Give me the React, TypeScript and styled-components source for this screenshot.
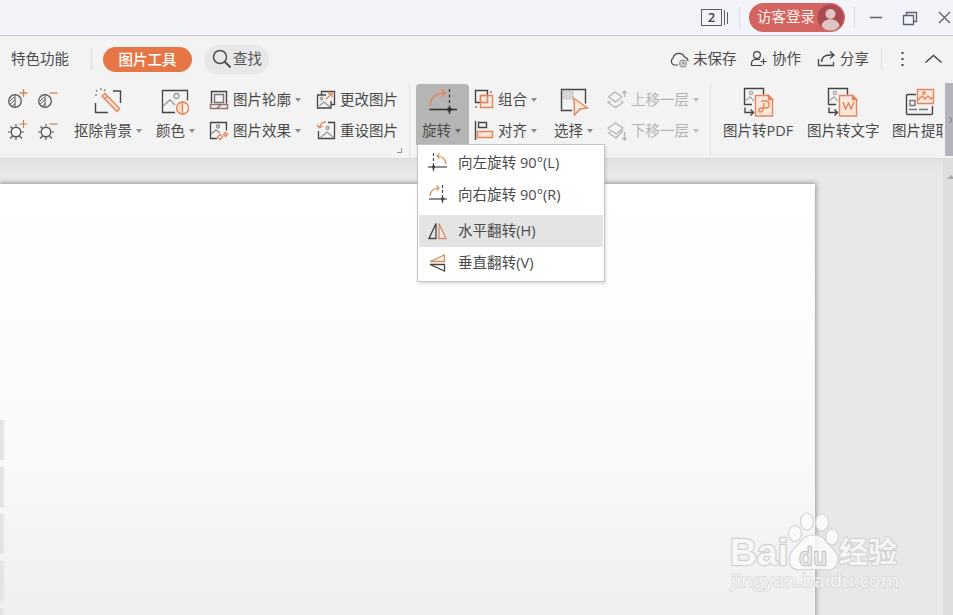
import React from "react";
import styled, { createGlobalStyle, css } from "styled-components";

const GlobalStyle = createGlobalStyle`
  * { box-sizing: border-box; }
  body { margin: 0; overflow: hidden; }
`;

const ORANGE = "#e0875c";
const DARK = "#454545";

const Window = styled.div`
  position: relative;
  display: flex;
  flex-direction: column;
  width: 953px;
  height: 615px;
  overflow: hidden;
  background: #e7e7e7;
  color: #4a4a4a;
  font-family: "Open Sans", "Noto Sans CJK SC", sans-serif;
  font-size: 14.5px;
  line-height: 20px;
  white-space: nowrap;
  svg { display: block; flex: none; fill: none; }
`;

const TitleBar = styled.header`
  display: flex;
  justify-content: flex-end;
  align-items: center;
  height: 36px;
  flex: none;
  background: #f2f4f9;
  border-bottom: 1px solid #c8cad3;
`;

const VLine = styled.span<{ $h: number; $l?: number; $r?: number }>`
  width: 1px;
  flex: none;
  height: ${(p) => p.$h}px;
  margin-left: ${(p) => p.$l ?? 0}px;
  margin-right: ${(p) => p.$r ?? 0}px;
  background: #dadce0;
`;

const TabCount = styled.div`
  display: flex;
  align-items: center;
  gap: 2px;
  height: 17px;
  b {
    width: 21px;
    height: 17px;
    border: 1px solid #59606c;
    font-size: 13px;
    line-height: 15px;
    font-weight: 600;
    text-align: center;
    color: #3c4047;
  }
  i { width: 1px; height: 15px; background: #59606c; }
  i:last-child { height: 12px; }
`;

const Login = styled.button`
  display: flex;
  align-items: center;
  justify-content: space-between;
  width: 96px;
  height: 29px;
  padding: 0 1px 1px 8px;
  border: 0;
  border-radius: 15px;
  background: #d4645f;
  color: #fff0ee;
  font: inherit;
`;

const WindowButtons = styled.div`
  display: flex;
  align-items: center;
  width: 83px;
`;

const TabBar = styled.nav`
  display: flex;
  align-items: center;
  height: 47px;
  flex: none;
  padding: 0 0 1px 11px;
  background: #f3f3f3;
`;

const ActiveTab = styled.span`
  width: 89px;
  height: 25px;
  border-radius: 13px;
  background: #e67646;
  color: #fff;
  font-weight: 500;
  line-height: 25px;
  text-align: center;
`;

const Search = styled.span`
  display: flex;
  align-items: center;
  gap: 1px;
  width: 65px;
  height: 29px;
  margin-left: 12px;
  padding-left: 8px;
  border-radius: 15px;
  background: #e8e8e9;
  color: #555;
`;

const Action = styled.span<{ $w: number }>`
  display: flex;
  align-items: center;
  gap: 4px;
  width: ${(p) => p.$w}px;
`;

const Spacer = styled.span`
  flex: 1;
`;

const Ribbon = styled.section`
  display: grid;
  grid-template-columns: 70px 82px 57px 107px 94px 6px 58px 78px 54px 105px 12px 84px 85px 51px 10px;
  height: 76px;
  flex: none;
  background: #f3f3f3;
  border-bottom: 1px solid #d7d7d7;
`;

const Adjust = styled.div`
  display: grid;
  grid-template-columns: 30px 30px;
  grid-template-rows: 31px 30px;
  padding: 5px 0 0 6px;
`;

const Big = styled.div<{ $pad?: number }>`
  display: flex;
  flex-direction: column;
  align-items: flex-start;
  gap: 3px;
  padding: 3px 0 0 ${(p) => p.$pad ?? 4}px;
  overflow: hidden;
`;

const IconSlot = styled.div<{ $ml: number }>`
  flex: none;
  padding-left: ${(p) => p.$ml}px;
  height: 32px;
`;

const LabelRow = styled.span`
  display: flex;
  align-items: center;
  gap: 4px;
`;

const Caret = styled.i<{ $dim?: boolean; $strong?: boolean }>`
  border: 3px solid transparent;
  border-top: 4px solid ${(p) => (p.$dim ? "#bdbdbd" : p.$strong ? "#666" : "#8c8c8c")};
  border-bottom: 0;
`;

const Stack = styled.div<{ $dim?: boolean }>`
  display: grid;
  grid-template-rows: 31px 31px;
  align-content: start;
  padding-top: 1px;
  ${(p) => p.$dim && css`color: #b3b3b3;`}
`;

const Small = styled.div`
  display: flex;
  align-items: center;
  gap: 4px;
`;

const Edge = styled.div`
  display: flex;
  align-items: flex-start;
  justify-content: space-between;
  border-right: 1px solid #e0e0e0;
  height: 74px;
`;

const Launcher = styled.span`
  align-self: flex-end;
  width: 5px;
  height: 5px;
  margin: 0 7px 4px -6px;
  border-right: 1px solid #999;
  border-bottom: 1px solid #999;
`;

const Rotate = styled.div`
  position: relative;
  display: flex;
  flex-direction: column;
  gap: 4px;
  width: 53px;
  height: 61px;
  margin-top: 1px;
  padding: 1px 0 0 6px;
  border-radius: 4px 4px 0 0;
  background: #b5b5b5;
`;

const Menu = styled.div`
  position: absolute;
  z-index: 3;
  left: 1px;
  top: 60px;
  width: 188px;
  height: 138px;
  padding: 2px 1px;
  background: #fff;
  border: 1px solid #c3c3c3;
  box-shadow: 1px 2px 3px rgba(0, 0, 0, 0.13);
`;

const MenuItem = styled.div<{ $hover?: boolean; $gap?: boolean }>`
  display: flex;
  align-items: center;
  gap: 10px;
  height: 32px;
  margin-top: ${(p) => (p.$gap ? 4 : 0)}px;
  padding-left: 9px;
  background: ${(p) => (p.$hover ? "#e4e4e4" : "transparent")};
  letter-spacing: 0.05px;
`;

const Overflow = styled.div`
  display: flex;
  align-items: center;
  justify-content: flex-end;
  width: 8px;
  height: 73px;
  margin-left: 2px;
  background: #b3b3bb;
  overflow: hidden;
`;

const Workspace = styled.main`
  display: flex;
  flex: 1;
  padding-top: 25px;
  background: linear-gradient(#e2e2e2, #e8e8e8 12px);
`;

const Page = styled.div`
  display: flex;
  flex-direction: column;
  width: 815px;
  height: 440px;
  padding-top: 236px;
  gap: 7px;
  background: linear-gradient(#fff 0, #fdfdfd 120px, #f9f9f9 280px, #efefef 431px);
  border-right: 1px solid #f8f8f8;
  box-shadow: 0 0 5px 1px rgba(0, 0, 0, 0.36);
`;

const Thumb = styled.span`
  flex: none;
  width: 3px;
  height: 40px;
  background: #e3e3e3;
  box-shadow: 1px 0 2px #e6e6e6;
`;

const ScrollBar = styled.div`
  width: 10px;
  height: 456px;
  margin: -25px 0 0 auto;
  padding: 16px 0 0 4px;
  background: #dedede;
`;

const Watermark = styled.div`
  position: absolute;
  left: 720px;
  top: 505px;
`;

const CloudIcon = () => (
  <svg width="20" height="20" viewBox="0 0 20 20" stroke={DARK} strokeWidth="1.2">
    <path d="M9 16H5a4 4 0 0 1-1-7 6 6 0 0 1 11.4-1A4.5 4.5 0 0 1 19 12" />
    <circle cx="14" cy="14.5" r="3.3" fill="#d8d8d8" stroke="#999" />
    <path d="M14 12.5v2.2h1.5" stroke="#888" />
  </svg>
);
const PeopleIcon = () => (
  <svg width="18" height="18" viewBox="0 0 18 18" stroke={DARK} strokeWidth="1.2">
    <circle cx="7" cy="5" r="3.4" />
    <path d="M10 9.5H5.500A4 4 0 0 0 1.500 13v2.500H12M10.500 11.500h6M13.500 8.500v6" />
  </svg>
);
const ShareIcon = () => (
  <svg width="19" height="18" viewBox="0 0 19 18" stroke={DARK} strokeWidth="1.3">
    <path d="M1.500 9v6.500h15V12M4.500 12c.4-4.500 3.500-7 8-7H17M13 1.500 17 5l-4 3.600" />
  </svg>
);

const HalfDisc = ({ plus }: { plus?: boolean }) => (
  <svg width="24" height="24" viewBox="0 0 24 24" stroke="#555" strokeWidth="1.3">
    <circle cx="9" cy="13" r="6.300" />
    <path d="M9 6.500v12.500M4 13l4-4M4.500 16 9 11.500M6.500 18 9 15.500" strokeWidth="1" />
    <path d={plus ? "M13.500 5h8M17.500 1v8" : "M13.500 5h8"} stroke="#cf8650" />
  </svg>
);
const Sun = ({ plus }: { plus?: boolean }) => (
  <svg width="24" height="24" viewBox="0 0 24 24" stroke="#555" strokeWidth="1.2">
    <circle cx="10" cy="13" r="4.800" strokeWidth="1.4" />
    <path d="M10 7V5M10 18.500V21M2 13h2.500M15.500 13H18M4.500 7.500l2 2M4 19.500 6.500 17M16 19.500 13.500 17" />
    <path d={plus ? "M13.500 5h8M17.500 1v8" : "M13.500 5h8"} stroke="#cf8650" />
  </svg>
);
const WandIcon = () => (
  <svg width="30" height="29" viewBox="0 0 30 29" stroke={DARK} strokeWidth="1.4">
    <path d="M2.500 17v9.500H15M20 5h7.500v12" />
    <path d="M9 10 12 7.500 26.500 22.500 24 25.500zM11.500 12.800l3-2.600" fill="#fbe2d4" stroke={ORANGE} />
    <path d="M8 2v3M3 4l2 2M2 9h3M11 5l2-2" stroke="#888" strokeDasharray="2 1" />
  </svg>
);
const ColorIcon = () => (
  <svg width="29" height="29" viewBox="0 0 29 29" stroke={DARK} strokeWidth="1.3">
    <path d="M14 26.500H1.500v-22h25v10" />
    <circle cx="15.500" cy="10" r="2.500" stroke="#999" />
    <path d="m2 20 7-6 5 5" stroke="#999" />
    <circle cx="21.500" cy="22" r="6" stroke={ORANGE} fill="#fbd9c6" />
    <path d="M21.500 16a6 6 0 0 1 0 12z" fill="#fff5ef" stroke={ORANGE} />
  </svg>
);
const OutlineIcon = () => (
  <svg width="20" height="20" viewBox="0 0 20 20" stroke={DARK} strokeWidth="1.4">
    <path d="M2.500 13.500V1.500h15v12" /><path d="M5.500 4.500h9v8h-9z" stroke="#777" />
    <path d="M1.500 14.500h17v4h-17zM8 18l4-3" stroke="#96706a" />
  </svg>
);
const EffectIcon = () => (
  <svg width="20" height="20" viewBox="0 0 20 20" stroke={DARK} strokeWidth="1.3">
    <path d="M8 17.500H1.500v-16h16v8" /><path d="m2 13 5-4 4 3" stroke="#888" /><circle cx="9" cy="5.500" r="1.500" stroke="#888" />
    <path d="m11 13.500 2.500 2.500-2.500 2.500L8.500 16zM16.500 11.500l2 2-2 2-2-2z" stroke={ORANGE} />
  </svg>
);
const ChangeIcon = () => (
  <svg width="20" height="20" viewBox="0 0 20 20" stroke={DARK} strokeWidth="1.3">
    <path d="M5.500 5V1.500h13v13H15M10 5H1.500v13H15v-7" /><circle cx="5.500" cy="8.500" r="1.300" stroke="#999" /><path d="m3 16 5-4 6 5" stroke="#999" />
    <path d="m10 9 6-5.500M12 3.500h4v4" stroke={ORANGE} />
  </svg>
);
const ResetIcon = () => (
  <svg width="20" height="20" viewBox="0 0 20 20" stroke={DARK} strokeWidth="1.3">
    <path d="M12 1.500h6.500v16h-16V10" /><circle cx="11.500" cy="7" r="1.500" stroke="#999" /><path d="m4 17 7-6 7 6" stroke="#999" />
    <path d="M10 1C6 1 4 4 3.500 7M1 4l2.500 3 3-2" stroke={ORANGE} />
  </svg>
);
const RotateIcon = () => (
  <svg width="30" height="30" viewBox="0 0 30 30" stroke="#333" strokeWidth="1.3">
    <path d="M1.500 24.500H29" strokeWidth="1.6" /><path d="M21.500 4v26" strokeDasharray="3 2.500" />
    <circle cx="21.500" cy="24.500" r="1.700" fill="#333" />
    <path d="M2 21C2 13 8 8 17 8M13 4l4.500 4-4.500 4" stroke={ORANGE} strokeWidth="1.5" />
  </svg>
);
const GroupIcon = () => (
  <svg width="20" height="22" viewBox="0 0 20 22" strokeWidth="1.4">
    <path d="M1.500 1.500h12v12h-12z" stroke={DARK} /><path d="M6.500 6.500h12v12h-12z" stroke={ORANGE} fill="#fbe3d6" fillOpacity=".6" />
    <path d="M6.500 6.500h7v7h-7z" stroke={ORANGE} /><path d="M16 3h2M1 18h2" stroke="#c66" />
  </svg>
);
const AlignIcon = () => (
  <svg width="20" height="20" viewBox="0 0 20 20" strokeWidth="1.4">
    <path d="M1.500 0v19M4.500 1.500h8v5h-8z" stroke={DARK} /><path d="M3.500 10.500h15v6h-15z" stroke={ORANGE} fill="#fbe3d6" />
  </svg>
);
const SelectIcon = () => (
  <svg width="30" height="30" viewBox="0 0 30 30" strokeWidth="1.4">
    <path d="M13 24.500H2.500v-21h24v14" stroke={DARK} /><path d="M4 5h10v8H4z" fill="#d7d7d7" stroke="#aaa" strokeDasharray="1 2" />
    <path d="M15 12.500 28.500 22 21 23 15.500 29z" stroke={ORANGE} fill="#fbe6da" />
  </svg>
);
const LayerIcon = ({ up }: { up?: boolean }) => (
  <svg width="21" height="20" viewBox="0 0 21 20" stroke="#b6b6b6" strokeWidth="1.4" strokeLinejoin="round">
    {up ? (
      <><path d="M2.500 7 9 2l7 5-6.500 5z" /><path d="M4 11l-2 1.500 7.500 5 7.500-5-2-1.500" /><path d="M18.500 7V1m-2 2 2-2 2 2" /></>
    ) : (
      <><path d="M4 9 2 7l7.500-5 7.500 5-2 2" /><path d="M2.500 12 6 10l4 3 5-4 1.500 1-6.500 7z" /><path d="M18.500 11v8m-2-2 2 2 2-2" /></>
    )}
  </svg>
);
const ConvertIcon = ({ word }: { word?: boolean }) => (
  <svg width="32" height="31" viewBox="0 0 32 31" strokeWidth="1.4">
    <path d="M10 18.500H2.500v-16h19v6" stroke={DARK} /><circle cx="9" cy="7" r="1.600" stroke="#aaa" /><path d="m3 15 5-4 4 4" stroke="#aaa" />
    <path d="M3 21.500v5h8M8.500 23.500l3 3-3 3" stroke={DARK} />
    <path d="M13.500 9.500h13l4 4v16.500h-17z" stroke={ORANGE} fill="#fbe7dc" /><path d="M26.500 9.500v4h4z" fill={ORANGE} stroke={ORANGE} />
    {word ? <path d="m17 16 2.500 7 3-6 2.500 6 3-7" stroke={ORANGE} /> : <path d="M19 15h5c4 0 4 7 0 7h-4c-4 0-4 4-2 4 3 0 4-4 4-9" stroke={ORANGE} />}
  </svg>
);
const ExtractIcon = () => (
  <svg width="32" height="31" viewBox="0 0 32 31" strokeWidth="1.4">
    <path d="M12 8.500H4a1.500 1.500 0 0 0-1.500 1.500v17A1.500 1.500 0 0 0 4 28.500h23a1.500 1.500 0 0 0 1.500-1.500V20" stroke={DARK} />
    <path d="M5 23.500h8M15 23.500h9M6 14.500h5v5H6z" stroke="#777" /><path d="M13.500 3.500h16v14h-16z" stroke={ORANGE} fill="#fbe7dc" />
    <path d="m14 14 4-4 3 3 3-3 3 3 2-2" stroke={ORANGE} /><circle cx="20" cy="7" r="1.200" stroke={ORANGE} />
  </svg>
);

const TurnIcon = ({ right }: { right?: boolean }) => (
  <svg width="20" height="20" viewBox="0 0 20 20" stroke={DARK} strokeWidth="1.2">
    {right ? (
      <><path d="M1 14h18" /><path d="M14.500 0v19" strokeDasharray="3 2" /><circle cx="14.500" cy="14" r="1.200" fill={DARK} /><path d="M2 11C2 7 5 3 11 3M8.500.5 11 3 8.500 5.500" stroke="#d99356" /></>
    ) : (
      <><path d="M0 14h19" /><path d="M5.500 0v19" strokeDasharray="3 2" /><circle cx="5.500" cy="14" r="1.200" fill={DARK} /><path d="M18 11c0-4-3-8-9-8M11.500.5 9 3l2.500 2.500" stroke="#d99356" /></>
    )}
  </svg>
);
const FlipIcon = ({ vertical }: { vertical?: boolean }) => (
  <svg width="20" height="20" viewBox="0 0 20 20" strokeWidth="1.3">
    {vertical ? (
      <><path d="M16.500 2v6.500H2z" stroke="#c9925f" fill="#fdf0e5" /><path d="M16.500 18v-6.500H2z" stroke={DARK} /></>
    ) : (
      <><path d="M8 2.500v15H1z" stroke={DARK} /><path d="M11 2.500v15h7z" stroke="#cc8c70" fill="#fbe6da" /></>
    )}
  </svg>
);

const BaiduMark = () => (
  <svg width="200" height="92" viewBox="0 0 200 92" fillOpacity=".85" stroke="#d2d2d2" strokeWidth="1.2" strokeLinejoin="round">
    <g fill="#fbfbfb">
      <g paintOrder="stroke">
        <text x="10" y="60" fontFamily="Liberation Sans, sans-serif" fontWeight="700" fontSize="37" textLength="58" lengthAdjust="spacingAndGlyphs" strokeWidth="2.400">Bai</text>
        <text x="119" y="58" fontFamily="Noto Sans CJK SC, sans-serif" fontWeight="700" fontSize="29" strokeWidth="2.200">经验</text>
        <text x="11" y="82" fontFamily="Open Sans, sans-serif" fontSize="18" textLength="168" lengthAdjust="spacingAndGlyphs" strokeWidth="1.600" strokeOpacity=".8">jingyan.baidu.com</text>
      </g>
      <ellipse cx="75" cy="28.500" rx="6.500" ry="8" /><ellipse cx="87" cy="16.500" rx="6.500" ry="8.500" />
      <ellipse cx="102" cy="17.500" rx="6.500" ry="8.500" /><ellipse cx="112" cy="32" rx="6.500" ry="8" />
      <path d="M81 36c6-8 19-8 25 0 3 5 11 9 12 17 0 9-5 12-11 12-9-1-18-1-27 0-7 0-12-4-11-12 1-8 9-12 12-17z" />
    </g>
    <text x="79.500" y="60" fontFamily="Liberation Sans, sans-serif" fontSize="23" fill="#f2f2f2" stroke="#c6c6c6" strokeWidth="2.400" paintOrder="stroke" textLength="27">du</text>
  </svg>
);

export default function App() {
  return (
    <Window>
      <GlobalStyle />
      <TitleBar>
        <TabCount><b>2</b><i /><i /></TabCount>
        <VLine $h={21} $l={11} $r={9} />
        <Login>
          访客登录
          <svg width="27" height="27" viewBox="0 0 27 27">
            <circle cx="13.500" cy="13.500" r="13" fill="#a94b50" />
            <circle cx="13.500" cy="10" r="5" fill="#dec5c3" />
            <path d="M4.500 22c1-9 17-9 18 0-4 6-14 6-18 0z" fill="#dec5c3" />
          </svg>
        </Login>
        <VLine $h={21} $l={9} $r={15} />
        <WindowButtons>
          <svg width="83" height="20" viewBox="0 0 83 20" stroke="#596071" strokeWidth="1.300">
            <path d="M0 9.500h12M33.500 7.500h10v9h-10zM36.500 7V4.500h10v9H44M69 4l11 11M80 4 69 15" />
          </svg>
        </WindowButtons>
      </TitleBar>

      <TabBar>
        特色功能
        <VLine $h={22} $l={22} $r={11} />
        <ActiveTab>图片工具</ActiveTab>
        <Search>
          <svg width="20" height="20" viewBox="0 0 20 20" stroke="#505050" strokeWidth="1.500"><circle cx="8" cy="8" r="6.500" /><path d="m12.500 12.500 6 6" strokeWidth="2" /></svg>
          查找
        </Search>
        <Spacer />
        <Action $w={81}><CloudIcon />未保存</Action>
        <Action $w={67}><PeopleIcon />协作</Action>
        <Action $w={64}><ShareIcon />分享</Action>
        <VLine $h={22} />
        <svg width="71" height="20" viewBox="0 0 71 20" stroke={DARK}>
          <path d="M20.500 3v2M20.500 9v2M20.500 15v2" strokeWidth="2" /><path d="m43.500 13.500 8-7 8 7" strokeWidth="1.500" />
        </svg>
      </TabBar>

      <Ribbon>
        <Adjust><HalfDisc plus /><HalfDisc /><Sun plus /><Sun /></Adjust>
        <Big><IconSlot $ml={19}><WandIcon /></IconSlot><LabelRow>抠除背景<Caret /></LabelRow></Big>
        <Big><IconSlot $ml={5}><ColorIcon /></IconSlot><LabelRow>颜色<Caret /></LabelRow></Big>
        <Stack>
          <Small><OutlineIcon />图片轮廓<Caret /></Small>
          <Small><EffectIcon />图片效果<Caret /></Small>
        </Stack>
        <Edge>
          <Stack>
            <Small><ChangeIcon />更改图片</Small>
            <Small><ResetIcon />重设图片</Small>
          </Stack>
          <Launcher />
        </Edge>
        <span />
        <Rotate>
          <IconSlot $ml={6}><RotateIcon /></IconSlot>
          <LabelRow>旋转<Caret $strong /></LabelRow>
          <Menu>
            <MenuItem><TurnIcon />向左旋转 90°(L)</MenuItem>
            <MenuItem><TurnIcon right />向右旋转 90°(R)</MenuItem>
            <MenuItem $hover $gap><FlipIcon />水平翻转(H)</MenuItem>
            <MenuItem><FlipIcon vertical />垂直翻转(V)</MenuItem>
          </Menu>
        </Rotate>
        <Stack>
          <Small><GroupIcon />组合<Caret /></Small>
          <Small><AlignIcon />对齐<Caret /></Small>
        </Stack>
        <Big $pad={2}><IconSlot $ml={5}><SelectIcon /></IconSlot><LabelRow>选择<Caret /></LabelRow></Big>
        <Edge>
          <Stack $dim>
            <Small><LayerIcon up />上移一层<Caret $dim /></Small>
            <Small><LayerIcon />下移一层<Caret $dim /></Small>
          </Stack>
        </Edge>
        <span />
        <Big $pad={0}><IconSlot $ml={19}><ConvertIcon /></IconSlot>图片转PDF</Big>
        <Big $pad={0}><IconSlot $ml={19}><ConvertIcon word /></IconSlot>图片转文字</Big>
        <Big $pad={0}><IconSlot $ml={12}><ExtractIcon /></IconSlot>图片提取</Big>
        <Overflow><svg width="6" height="10" viewBox="0 0 6 10" stroke="#777"><path d="m2 2 3 3-3 3" /></svg></Overflow>
      </Ribbon>

      <Workspace>
        <Page><Thumb /><Thumb /><Thumb /><Thumb /><Thumb /></Page>
        <ScrollBar><svg width="6" height="5" viewBox="0 0 6 5"><path d="m0 4 4-4 4 4z" fill="#aaa" /></svg></ScrollBar>
      </Workspace>
      <Watermark><BaiduMark /></Watermark>
    </Window>
  );
}
